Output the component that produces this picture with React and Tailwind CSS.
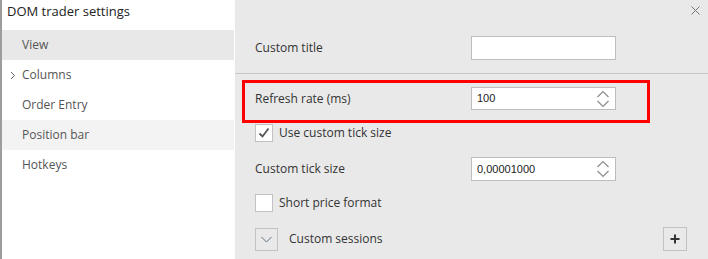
import React from "react";

const font = { fontFamily: '"Open Sans", "Noto Sans", sans-serif' };

function Spinner() {
  return (
    <svg width="14" height="20" viewBox="0 0 14 20" className="shrink-0">
      <path d="M1.5 8 L7 2.5 L12.5 8" fill="none" stroke="#8c8c8c" strokeWidth="1.2" />
      <path d="M1.5 12 L7 17.5 L12.5 12" fill="none" stroke="#8c8c8c" strokeWidth="1.2" />
    </svg>
  );
}

function NumInput({ value }) {
  return (
    <div className="w-[145px] h-[24px] bg-white border border-[#bdbdbd] flex items-center pl-[5px] pr-[5px] justify-between">
      <span className="text-[11px] text-[#222]" style={{ fontFamily: '"Liberation Sans", Arial, sans-serif' }}>{value}</span>
      <Spinner />
    </div>
  );
}

function Checkbox({ checked }) {
  return (
    <div className="w-[18px] h-[18px] bg-white border border-[#c2c2c2] flex items-center justify-center shrink-0">
      {checked && (
        <svg width="12" height="12" viewBox="0 0 12 12">
          <path d="M1.5 6.5 L4.5 9.5 L10.5 1.5" fill="none" stroke="#555" strokeWidth="1.8" />
        </svg>
      )}
    </div>
  );
}

export default function App() {
  const items = [
    { label: "View", bg: "bg-[#e8e8e8]" },
    { label: "Columns", chevron: true },
    { label: "Order Entry" },
    { label: "Position bar", bg: "bg-[#f3f3f3]" },
    { label: "Hotkeys" },
  ];
  return (
    <div className="w-[708px] h-[259px] flex overflow-hidden bg-white" style={font}>
      {/* Sidebar */}
      <div className="w-[235px] h-full border-l-2 border-[#9c9c9c] bg-white flex flex-col pr-px">
        <div className="h-[30px] pl-[5px] pt-[2px] text-[13px] text-[#222] leading-[18px]">DOM trader settings</div>
        {items.map((it) => (
          <div key={it.label} className={`h-[30px] flex items-center relative text-[12px] text-[#555] ${it.bg || ""}`}>
            <span className="w-[20px] flex justify-start pl-[8px]">
              {it.chevron && (
                <svg width="6" height="9" viewBox="0 0 6 9">
                  <path d="M1 1 L4.5 4.5 L1 8" fill="none" stroke="#666" strokeWidth="1" />
                </svg>
              )}
            </span>
            <span>{it.label}</span>
          </div>
        ))}
      </div>

      {/* Main panel */}
      <div className="flex-1 h-full bg-[#e9e9e9] flex flex-col">
        <div className="h-[74px] border-b border-[#c6c6c6] flex flex-col">
          <div className="h-[24px] flex justify-end items-start pt-[6px] pr-[8px]">
            <svg width="9" height="9" viewBox="0 0 9 9">
              <path d="M0.5 0.5 L8.5 8.5 M8.5 0.5 L0.5 8.5" stroke="#777" strokeWidth="1" />
            </svg>
          </div>
          <div className="mt-[12px] h-[24px] flex items-center">
            <span className="w-[236px] pl-[20px] text-[12px] text-[#333]">Custom title</span>
            <div className="w-[145px] h-[24px] bg-white border border-[#bdbdbd]" />
          </div>
        </div>

        <div className="mt-[6px] ml-[7px] w-[408px] h-[43px] border-[3px] border-[#ff0000] flex items-start pt-[4px]">
          <span className="w-[226px] pl-[10px] text-[12px] text-[#333] h-[23px] flex items-center">Refresh rate (ms)</span>
          <div className="h-[23px]">
            <div className="w-[145px] h-[23px] bg-white border border-[#bdbdbd] flex items-center pl-[5px] pr-[5px] justify-between">
              <span className="text-[11px] text-[#222]" style={{ fontFamily: '"Liberation Sans", Arial, sans-serif' }}>100</span>
              <Spinner />
            </div>
          </div>
        </div>

        <div className="mt-[1px] h-[18px] pl-[20px] flex items-center gap-[6px]">
          <Checkbox checked />
          <span className="text-[12px] text-[#333]">Use custom tick size</span>
        </div>

        <div className="mt-[15px] h-[24px] flex items-center">
          <span className="w-[236px] pl-[20px] text-[12px] text-[#333]">Custom tick size</span>
          <NumInput value="0,00001000" />
        </div>

        <div className="mt-[13px] h-[18px] pl-[20px] flex items-center gap-[6px]">
          <Checkbox />
          <span className="text-[12px] text-[#333]">Short price format</span>
        </div>

        <div className="mt-[15px] h-[24px] pl-[20px] pr-[21px] flex items-center">
          <div className="w-[23px] h-[23px] border border-[#c2c2c2] flex items-center justify-center">
            <svg width="11" height="7" viewBox="0 0 11 7">
              <path d="M0.5 1 L5.5 6 L10.5 1" fill="none" stroke="#5f7080" strokeWidth="1" />
            </svg>
          </div>
          <span className="ml-[11px] text-[12px] text-[#333] flex-1">Custom sessions</span>
          <div className="w-[24px] h-[24px] border border-[#c2c2c2] flex items-center justify-center">
            <svg width="10" height="10" viewBox="0 0 10 10">
              <path d="M5 0.5 V9.5 M0.5 5 H9.5" stroke="#333" strokeWidth="2" />
            </svg>
          </div>
        </div>
      </div>
    </div>
  );
}
